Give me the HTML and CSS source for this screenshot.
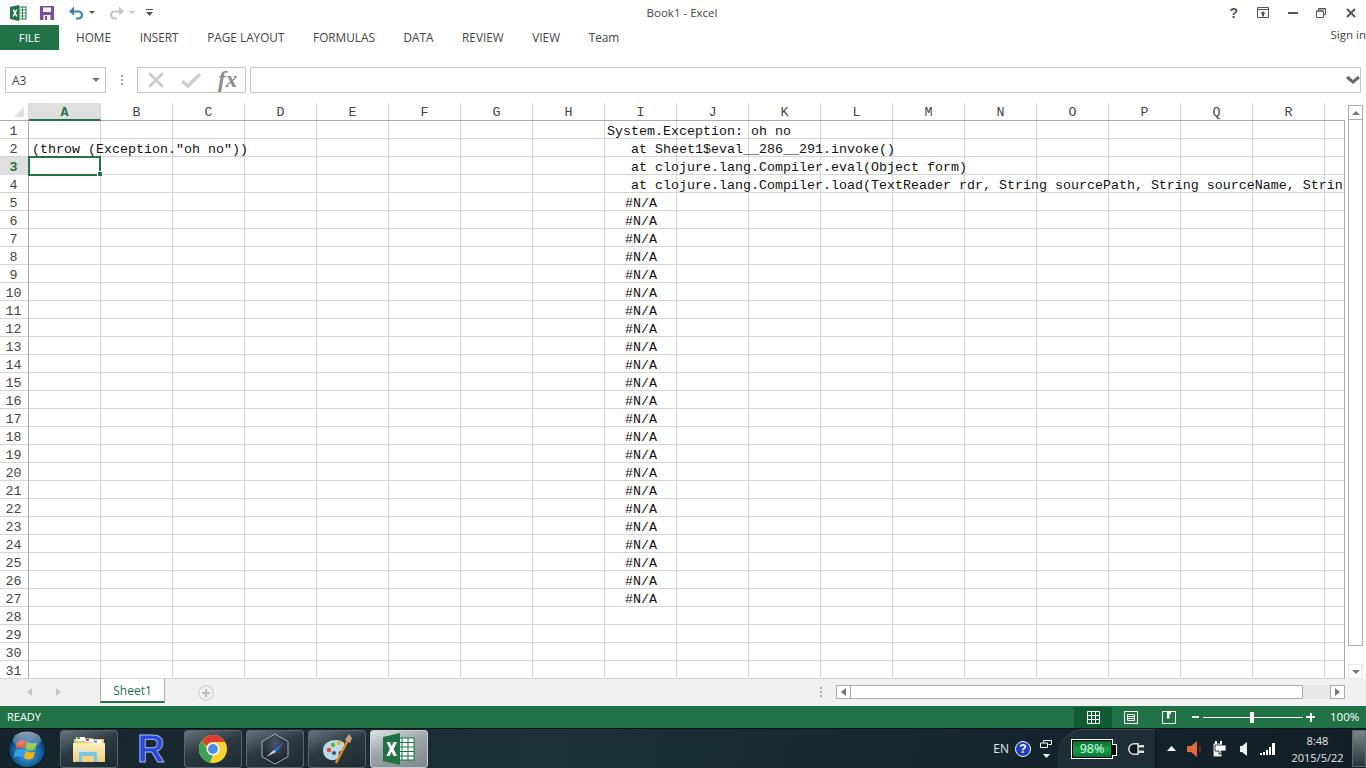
FILE: index.html
```html
<!DOCTYPE html>
<html lang="en">
<head>
<meta charset="utf-8">
<title>Book1 - Excel</title>
<link rel="stylesheet" href="styles.css">
</head>
<body>
<div class="app">
  <header class="titlebar">
    <div class="qat">
      <svg class="q-xl" width="17" height="16" viewBox="0 0 17 16"><rect x="6" y="2" width="10" height="12" fill="#fff" stroke="#217346"/><path d="M9 2v12M12.500 2v12M6 5h10M6 8h10M6 11h10" stroke="#217346" stroke-width=".8"/><path d="M0 2l9-2v16l-9-2z" fill="#217346"/><path d="M2.500 4.500h1.700L5 6.500l.9-2h1.600L5.900 8l1.700 3.500H6L5 9.300 4 11.500H2.400L4.100 8z" fill="#fff"/></svg>
      <svg class="q-save" width="14" height="14" viewBox="0 0 14 14"><path d="M0 0h14v14H0z" fill="#7f4b9f"/><path d="M3 1.500h8v4.500H3z" fill="#fff"/><path d="M3.500 9h7v5h-7z" fill="#fff"/><path d="M5 10h2v4H5z" fill="#7f4b9f"/></svg>
      <svg class="q-undo" width="15" height="14" viewBox="0 0 15 14"><path d="M2 5.500h7.500a3.500 3.500 0 0 1 0 7H7" fill="none" stroke="#3b7fb5" stroke-width="2.200"/><path d="M0 5.500L5 .5v9z" fill="#3b7fb5"/></svg>
      <span class="caret c-undo"></span>
      <svg class="q-redo" width="15" height="14" viewBox="0 0 15 14"><path d="M13 5.500H5.500a3.500 3.500 0 0 0 0 7H8" fill="none" stroke="#c4c4c4" stroke-width="2.200"/><path d="M15 5.500L10 .5v9z" fill="#c4c4c4"/></svg>
      <span class="caret c-redo light"></span>
      <svg class="q-cust" width="7" height="8" viewBox="0 0 7 8"><path d="M0 0h7v1H0zM0 3h7L3.500 7z" fill="#555"/></svg>
    </div>
    <div class="doc-title">Book1 - Excel</div>
    <div class="winctl">
      <span class="help">?</span>
      <svg class="w-disp" width="12" height="11" viewBox="0 0 12 11"><path d="M.5.500h11v10H.5zM.5 2.500h11" fill="none" stroke="#555"/><path d="M6 4l2.500 3H7v2.500H5V7H3.500z" fill="#555"/></svg>
      <svg class="w-min" width="10" height="3" viewBox="0 0 10 3"><path d="M0 0h10v2H0z" fill="#555"/></svg>
      <svg class="w-res" width="10" height="10" viewBox="0 0 10 10"><path d="M2.500 2.500V.5h7v6h-2M.5 3v6.500h7V3z" fill="none" stroke="#555"/><path d="M.5 3h7M2.500 1h7" stroke="#555"/></svg>
      <svg class="w-close" width="10" height="10" viewBox="0 0 10 10"><path d="M1 1l8 8M9 1L1 9" stroke="#555" stroke-width="2"/></svg>
    </div>
  </header>

  <nav class="ribbon">
    <div class="file">FILE</div>
    <div class="rtabs">
      <span class="rtab">HOME</span>
      <span class="rtab">INSERT</span>
      <span class="rtab">PAGE LAYOUT</span>
      <span class="rtab">FORMULAS</span>
      <span class="rtab">DATA</span>
      <span class="rtab">REVIEW</span>
      <span class="rtab">VIEW</span>
      <span class="rtab">Team</span>
    </div>
    <div class="signin">Sign in</div>
  </nav>

  <section class="fbar">
    <div class="namebox"><span>A3</span><i class="tri"></i></div>
    <div class="dots"></div>
    <div class="fbtns">
      <svg width="18" height="16" viewBox="0 0 18 16"><path d="M2 1l14 14M16 1L2 15" stroke="#cfcfcf" stroke-width="3"/></svg>
      <svg width="20" height="15" viewBox="0 0 20 15"><path d="M1 8l6 5L19 1" fill="none" stroke="#cfcfcf" stroke-width="3.400"/></svg>
      <span class="fx">fx</span>
    </div>
    <div class="finput">
      <svg width="14" height="9" viewBox="0 0 14 9"><path d="M1 1l6 5 6-5" fill="none" stroke="#666" stroke-width="3"/></svg>
    </div>
  </section>

  <section class="book">
    <div class="gridwrap">
      <div class="colhead">
        <div class="corner"><i></i></div>
        <div class="ch sel">A</div><div class="ch">B</div><div class="ch">C</div><div class="ch">D</div><div class="ch">E</div><div class="ch">F</div><div class="ch">G</div><div class="ch">H</div><div class="ch">I</div><div class="ch">J</div><div class="ch">K</div><div class="ch">L</div><div class="ch">M</div><div class="ch">N</div><div class="ch">O</div><div class="ch">P</div><div class="ch">Q</div><div class="ch">R</div><div class="ch tail"></div>
      </div>
      <div class="sheet">
        <div class="row"><span class="rh">1</span><span class="cell ci">System.Exception: oh no</span></div>
        <div class="row"><span class="rh">2</span><span class="cell ca">(throw (Exception."oh no"))</span><span class="cell ci">   at Sheet1$eval__286__291.invoke()</span></div>
        <div class="row"><span class="rh rsel">3</span><span class="cell ci">   at clojure.lang.Compiler.eval(Object form)</span></div>
        <div class="row"><span class="rh">4</span><span class="cell ci">   at clojure.lang.Compiler.load(TextReader rdr, String sourcePath, String sourceName, Strin</span></div>
        <div class="row"><span class="rh">5</span><span class="cell na">#N/A</span></div>
        <div class="row"><span class="rh">6</span><span class="cell na">#N/A</span></div>
        <div class="row"><span class="rh">7</span><span class="cell na">#N/A</span></div>
        <div class="row"><span class="rh">8</span><span class="cell na">#N/A</span></div>
        <div class="row"><span class="rh">9</span><span class="cell na">#N/A</span></div>
        <div class="row"><span class="rh">10</span><span class="cell na">#N/A</span></div>
        <div class="row"><span class="rh">11</span><span class="cell na">#N/A</span></div>
        <div class="row"><span class="rh">12</span><span class="cell na">#N/A</span></div>
        <div class="row"><span class="rh">13</span><span class="cell na">#N/A</span></div>
        <div class="row"><span class="rh">14</span><span class="cell na">#N/A</span></div>
        <div class="row"><span class="rh">15</span><span class="cell na">#N/A</span></div>
        <div class="row"><span class="rh">16</span><span class="cell na">#N/A</span></div>
        <div class="row"><span class="rh">17</span><span class="cell na">#N/A</span></div>
        <div class="row"><span class="rh">18</span><span class="cell na">#N/A</span></div>
        <div class="row"><span class="rh">19</span><span class="cell na">#N/A</span></div>
        <div class="row"><span class="rh">20</span><span class="cell na">#N/A</span></div>
        <div class="row"><span class="rh">21</span><span class="cell na">#N/A</span></div>
        <div class="row"><span class="rh">22</span><span class="cell na">#N/A</span></div>
        <div class="row"><span class="rh">23</span><span class="cell na">#N/A</span></div>
        <div class="row"><span class="rh">24</span><span class="cell na">#N/A</span></div>
        <div class="row"><span class="rh">25</span><span class="cell na">#N/A</span></div>
        <div class="row"><span class="rh">26</span><span class="cell na">#N/A</span></div>
        <div class="row"><span class="rh">27</span><span class="cell na">#N/A</span></div>
        <div class="row"><span class="rh">28</span></div>
        <div class="row"><span class="rh">29</span></div>
        <div class="row"><span class="rh">30</span></div>
        <div class="row"><span class="rh">31</span></div>
        <div class="active"><i></i></div>
      </div>
    </div>
    <div class="vscroll">
      <div class="sbtn up"><i></i></div>
      <div class="vthumb"></div>
      <div class="sbtn down"><i></i></div>
    </div>
  </section>

  <section class="tabbar">
    <div class="tabnav"><i class="nav-l"></i><i class="nav-r"></i></div>
    <div class="tab">Sheet1</div>
    <div class="addsheet">
      <svg width="16" height="16" viewBox="0 0 16 16"><circle cx="8" cy="8" r="7.200" fill="none" stroke="#c8c8c8"/><path d="M4 8h8M8 4v8" stroke="#bdbdbd" stroke-width="2"/></svg>
    </div>
    <div class="hdots"></div>
    <div class="hscroll">
      <div class="hbtn"><i class="nav-dl"></i></div>
      <div class="hthumb"></div>
      <div class="htrack"></div>
      <div class="hbtn"><i class="nav-dr"></i></div>
    </div>
  </section>

  <footer class="status">
    <div class="ready">READY</div>
    <div class="views">
      <div class="vb on"><svg width="13" height="13" viewBox="0 0 13 13"><path d="M.5.500h12v12H.5zM4.500.5v12M8.500.5v12M.5 4.500h12M.5 8.500h12" fill="none" stroke="#fff"/></svg></div>
      <div class="vb"><svg width="14" height="13" viewBox="0 0 14 13"><path d="M.5.500h13v12H.5zM3.500 3.500h7v6h-7zM4 5.500h6M4 7.500h6" fill="none" stroke="#fff"/></svg></div>
      <div class="vb"><svg width="14" height="13" viewBox="0 0 14 13"><path d="M.5.500h13v12H.5z" fill="none" stroke="#fff"/><path d="M5 0h2.500v7.500H5zM7.500 0H9v3H7.500z" fill="#fff"/></svg></div>
    </div>
    <div class="zoom">
      <i class="zm"></i>
      <i class="zline l"></i><i class="zthumb"></i><i class="zline r"></i>
      <i class="zp"></i>
    </div>
    <div class="pct">100%</div>
  </footer>

  <div class="taskbar">
    <div class="orb">
      <svg width="38" height="38" viewBox="0 0 38 38">
        <defs>
          <radialGradient id="og" cx="50%" cy="60%" r="55%"><stop offset="0" stop-color="#3fb1e8"/><stop offset=".7" stop-color="#135c9c"/><stop offset="1" stop-color="#0d2c4e"/></radialGradient>
          <linearGradient id="gls" x1="0" y1="0" x2="0" y2="1"><stop offset="0" stop-color="#fff" stop-opacity=".55"/><stop offset="1" stop-color="#fff" stop-opacity=".05"/></linearGradient>
        </defs>
        <circle cx="19" cy="19" r="18.500" fill="url(#og)" stroke="#0b1a26"/>
        <path d="M9 12q5-3 9-.5l-1.500 7q-4-2-9 .5z" fill="#e8552c"/>
        <path d="M19 12q5 2.500 10 .5l-2 7q-5 2-9.500-.5z" fill="#8cc63f"/>
        <path d="M7.300 20.500q4.500-2.500 9 0l-1.500 7q-4.500-2.500-9 0z" fill="#3aa3e3"/>
        <path d="M17.500 21q4.500 2.500 9.500.5l-2 7q-5 2-9-.5z" fill="#f5b21b"/>
        <ellipse cx="19" cy="10" rx="14" ry="8.500" fill="url(#gls)"/>
      </svg>
    </div>
    <div class="tb t-ex">
      <svg width="32" height="28" viewBox="0 0 32 28">
        <defs><linearGradient id="fo" x1="0" y1="0" x2="0" y2="1"><stop offset="0" stop-color="#fdf1bd"/><stop offset="1" stop-color="#eecf79"/></linearGradient></defs>
        <path d="M1 4h30v23H1z" fill="#e8c66d"/>
        <path d="M3 2h9v4H3z" fill="#fff"/><path d="M4 2h3v2H4z" fill="#3fae49"/>
        <path d="M12 3.500h8V7h-8z" fill="#fff"/><path d="M13 4h3v2h-3z" fill="#cf4b37"/>
        <path d="M20 5h9v3h-9z" fill="#fff"/><path d="M21 5.500h3v2h-3z" fill="#3b8ed0"/>
        <path d="M0 8h32v19H0z" fill="url(#fo)"/>
        <path d="M6 17h18v10h-3v-6H9v6H6z" fill="#7ec6e8"/><path d="M4 15h10v2H4z" fill="#c6ecf8"/>
      </svg>
    </div>
    <div class="r-pin"><span>R</span></div>
    <div class="tb t-ch">
      <svg width="28" height="28" viewBox="0 0 28 28">
        <circle cx="14" cy="14" r="14" fill="#fbd433"/>
        <path d="M14 0a14 14 0 0 1 12.100 7H14a7 7 0 0 0-6.600 4.500L2.900 5.500A14 14 0 0 1 14 0z" fill="#dd3e32"/>
        <path d="M2.900 5.500L8 14a6 6 0 0 0 6 6l-3.300 7.600A14 14 0 0 1 2.900 5.500z" fill="#3ba457"/>
        <circle cx="14" cy="14" r="6.500" fill="#fff"/><circle cx="14" cy="14" r="5" fill="#4d8fdf"/>
      </svg>
    </div>
    <div class="tb t-sa">
      <svg width="28" height="32" viewBox="0 0 28 32">
        <defs><radialGradient id="hx" cx="50%" cy="30%" r="70%"><stop offset="0" stop-color="#4a5568"/><stop offset="1" stop-color="#171c28"/></radialGradient></defs>
        <path d="M14 1l13 7.500v15L14 31 1 23.500v-15z" fill="url(#hx)" stroke="#aeb3ba"/>
        <path d="M23 9L13 17l2 2z" fill="#1a7be8"/><path d="M5 24l8-7 2 2z" fill="#d6d9de"/>
      </svg>
    </div>
    <div class="tb t-pa">
      <svg width="32" height="30" viewBox="0 0 32 30">
        <path d="M3 17c0-7 7-10 13-10 7 0 10 4 9 8-1 3-5 2-6 4-1 3 1 5-2 7-5 3-14 0-14-9z" transform="translate(-1 -1)" fill="#bcd9ea"/>
        <circle cx="8" cy="16" r="2.200" fill="#d94a3b"/><circle cx="12" cy="11" r="2.200" fill="#6bb33e"/><circle cx="18" cy="9" r="2.200" fill="#e6b32d"/><circle cx="13" cy="19" r="2" fill="#31525f"/>
        <path d="M27 6L15 29" stroke="#e98a1f" stroke-width="2.400"/><path d="M24 6l4-6 3 4-2 5z" fill="#c5a078"/>
      </svg>
    </div>
    <div class="tb t-xl">
      <svg width="32" height="32" viewBox="0 0 32 32">
        <path d="M14 5h17v22H14z" fill="#fff" stroke="#1f7244"/>
        <path d="M19 5v22M25 5v22M14 9.500h17M14 14h17M14 18.500h17M14 23h17" stroke="#1f7244"/>
        <path d="M0 4L17 0v32L0 28z" fill="#1f7244"/>
        <path d="M3.500 9h3.400l1.800 4.300L10.600 9H14l-3.400 7L14 23h-3.500l-1.900-4.400L6.700 23H3.300l3.500-7z" fill="#fff"/>
      </svg>
    </div>
    <div class="tray">
      <span class="lang">EN</span>
      <span class="qhelp">?</span>
      <div class="lbar">
        <svg width="12" height="8" viewBox="0 0 12 8"><path d="M3.500 2.500v-2h8v4h-3M.5 3h7v4.500h-7z" fill="none" stroke="#fff"/></svg>
        <svg width="7" height="4" viewBox="0 0 7 4"><path d="M0 0h7L3.500 4z" fill="#fff"/></svg>
      </div>
      <div class="gadget">
        <div class="batt"><div class="bfill">98%</div></div>
        <svg class="plug" width="17" height="12" viewBox="0 0 17 12"><path d="M10 .8H6a5.200 5.200 0 0 0 0 10.400h4z" fill="#0f171b" stroke="#ddd" stroke-width="1.500"/><path d="M10 2h6v2.500h-6zM10 7.500h6V10h-6z" fill="#ddd"/></svg>
      </div>
      <div class="sysicons">
        <svg width="9" height="5" viewBox="0 0 9 5"><path d="M4.500 0L9 5H0z" fill="#fff"/></svg>
        <svg class="s-spk" width="16" height="18" viewBox="0 0 16 18"><path d="M0 6h4l6-5v16l-6-5H0z" fill="#e06a3a"/><path d="M13 6v6" stroke="#7a2c1c" stroke-width="1.500"/></svg>
        <svg width="14" height="18" viewBox="0 0 14 18"><path d="M1 3h9v14H1z" fill="#eee" stroke="#111"/><path d="M4 1v4M9 1v4" stroke="#fff" stroke-width="2"/><path d="M3 5h11v6H9v3H7v-3H3z" fill="#fff" stroke="#111" stroke-width=".8"/></svg>
        <svg class="s-snd" width="7" height="14" viewBox="0 0 7 14"><path d="M0 4h2l5-4v14l-5-4H0z" fill="#eee"/></svg>
        <svg class="s-sig" width="15" height="12" viewBox="0 0 15 12"><path d="M0 10h2v2H0zM3 9h2v3H3zM6 7h2v5H6zM9 4h2v8H9zM12 0h3v12h-3z" fill="#fff"/></svg>
      </div>
      <div class="clock"><span>8:48</span><span>2015/5/22</span></div>
      <div class="desk"></div>
    </div>
  </div>
</div>
</body>
</html>
```

FILE: styles.css
```css
* { box-sizing: border-box; }
html, body { margin: 0; padding: 0; }
body { width: 1366px; height: 768px; overflow: hidden; background: #fff; font-family: "Open Sans", "Liberation Sans", sans-serif; color: #444; }
.app { display: flex; flex-direction: column; width: 1366px; height: 768px; }
i { display: block; }

/* title bar */
.titlebar { height: 25px; display: flex; align-items: center; position: relative; flex: none; }
.qat { display: flex; align-items: center; padding-left: 10px; }
.q-save { margin-left: 13px; }
.q-undo { margin-left: 15px; }
.caret { width: 0; height: 0; border-left: 3px solid transparent; border-right: 3px solid transparent; border-top: 3px solid #555; margin-left: 5px; }
.caret.light { border-top-color: #c4c4c4; }
.q-redo { margin-left: 14px; }
.q-cust { margin-left: 11px; }
.doc-title { position: absolute; left: 0; right: 0; top: 4px; text-align: center; font-size: 11.500px; line-height: 17px; text-indent: -2px; }
.winctl { margin-left: auto; display: flex; align-items: center; padding-right: 10px; }
.help { font: bold 14px "Liberation Sans", sans-serif; color: #555; }
.w-disp { margin-left: 19px; }
.w-min { margin-left: 19px; margin-top: 2px; }
.w-res { margin-left: 18px; }
.w-close { margin-left: 20px; }

/* ribbon */
.ribbon { height: 25px; display: flex; flex: none; position: relative; }
.file { width: 59px; background: #217346; color: #fff; font-size: 11.500px; line-height: 25px; text-align: center; }
.rtabs { display: flex; gap: 28.600px; padding-left: 17px; font-size: 11.800px; line-height: 25px; }
.signin { margin-left: auto; font-size: 11.500px; line-height: 20px; color: #444; }

/* formula bar */
.fbar { height: 53px; flex: none; display: flex; padding: 17px 5px 10px 5px; }
.namebox { width: 101px; border: 1px solid #c6c6c6; display: flex; align-items: center; justify-content: space-between; padding: 0 4px 0 6px; font-size: 12px; }
.tri { width: 0; height: 0; border-left: 4px solid transparent; border-right: 4px solid transparent; border-top: 4px solid #777; margin-right: 1px; }
.dots { width: 2px; height: 10px; margin: 8px 14px 0 15px; background: repeating-linear-gradient(to bottom, #aaa 0 2px, transparent 2px 4px); }
.fbtns { width: 109px; border: 1px solid #c6c6c6; display: flex; align-items: center; gap: 16px; padding-left: 9px; }
.fx { font: italic bold 23px "Liberation Serif", serif; color: #8a8a8a; margin-left: 1px; line-height: 24px; }
.finput { width: 1111px; margin-left: 4px; border: 1px solid #c6c6c6; display: flex; align-items: center; justify-content: flex-end; }

/* grid */
.book { height: 576px; flex: none; display: flex; }
.gridwrap { width: 1345px; flex: none; }
.colhead { height: 18px; display: flex; border-bottom: 1px solid #ababab; font: 13.330px/20px "Liberation Mono", monospace; color: #444; }
.corner { width: 29px; flex: none; position: relative; border-right: 1px solid #d4d4d4; }
.corner i { position: absolute; right: 4px; bottom: 3px; width: 0; height: 0; border-left: 10px solid transparent; border-bottom: 10px solid #dfdfdf; }
.ch { width: 72px; flex: none; text-align: center; border-right: 1px solid #d4d4d4; }
.ch.tail { width: 20px; border-right: none; }
.ch.sel { background: #dfdfdf; color: #217346; font-weight: bold; border-bottom: 2px solid #217346; height: 18px; }
.sheet { height: 558px; width: 1345px; position: relative; overflow: hidden; border-right: 1px solid #ababab;
  background-image: linear-gradient(to left, #d4d4d4 1px, transparent 1px), linear-gradient(to top, #d4d4d4 1px, transparent 1px);
  background-size: 72px 18px, 72px 18px; background-position: 29px 0, 0 0; }
.row { height: 18px; display: grid; grid-template-columns: 29px repeat(18, 72px) 20px; font: 13.330px/16px "Liberation Mono", monospace; color: #111; white-space: pre; }
.rh { grid-column: 1; height: 18px; text-align: center; border-right: 1px solid #ababab; padding: 3px 1px 0 0; color: #444; }
.rsel { background: #dfdfdf; color: #217346; font-weight: bold; border-bottom: 1px solid #dfdfdf; }
.cell { min-width: 0; height: 18px; padding-top: 3px; }
.ca { grid-column: 2; padding-left: 3px; }
.ci { grid-column: 10; padding-left: 2px; }
.na { grid-column: 10; text-align: center; }
.active { position: absolute; left: 28px; top: 35px; width: 73px; height: 20px; border: 2px solid #217346; }
.active i { position: absolute; right: -4px; bottom: -3px; background: #217346; border: 1px solid #fff; box-sizing: content-box; width: 4px; height: 4px; }

/* vertical scrollbar */
.vscroll { flex: 1; display: flex; flex-direction: column; padding: 2px 3px; background: #fff; }
.sbtn { height: 15px; border: 1px solid #ababab; display: flex; align-items: center; justify-content: center; flex: none; background: #fff; }
.up i { width: 0; height: 0; border-left: 4px solid transparent; border-right: 4px solid transparent; border-bottom: 4px solid #777; }
.down i { width: 0; height: 0; border-left: 4px solid transparent; border-right: 4px solid transparent; border-top: 4px solid #777; }
.down { border-color: #e8e8e8; }
.vthumb { height: 526px; border: 1px solid #ababab; border-top: none; background: #fff; margin-bottom: 18px; flex: none; }

/* sheet tabs */
.tabbar { height: 27px; flex: none; background: #f1f1f1; display: flex; align-items: flex-start; }
.tabnav { width: 100px; display: flex; gap: 24px; padding: 9px 0 0 27px; }
.nav-l { border: 4px solid transparent; border-left: none; border-right: 5px solid #c6c6c6; }
.nav-r { border: 4px solid transparent; border-right: none; border-left: 5px solid #c6c6c6; }
.tab { width: 65px; height: 24px; background: #fff; border: 1px solid #ababab; border-top: none; border-bottom: 2px solid #217346; color: #217346; font-size: 12px; line-height: 23px; text-align: center; }
.addsheet { margin: 5px 0 0 33px; height: 16px; }
.hdots { width: 2px; height: 10px; margin: 8px 0 0 606px; background: repeating-linear-gradient(to bottom, #aaa 0 2px, transparent 2px 4px); }
.hscroll { margin: 6px 0 0 14px; height: 14px; width: 509px; display: flex; }
.hbtn { width: 15px; border: 1px solid #ababab; background: #fff; display: flex; align-items: center; justify-content: center; flex: none; }
.nav-dl { border: 4px solid transparent; border-left: none; border-right: 5px solid #777; }
.nav-dr { border: 4px solid transparent; border-right: none; border-left: 5px solid #777; }
.hthumb { width: 452px; background: #fff; border: 1px solid #ababab; border-left: none; flex: none; }
.htrack { flex: 1; background: #e8e8e8; }

/* status bar */
.status { height: 22px; flex: none; background: #217346; color: #fff; display: flex; align-items: stretch; font-size: 11.500px; line-height: 21px; }
.ready { padding-left: 7px; width: 1074px; font-size: 11px; }
.views { display: flex; }
.vb { width: 38px; display: flex; align-items: center; justify-content: center; }
.vb.on { background: #0f5c33; margin-top: 1px; }
.zoom { display: flex; align-items: center; padding-left: 4px; width: 142px; }
.zm { width: 7px; height: 2px; background: #fff; margin-right: 4px; }
.zline { height: 1px; background: #fff; }
.zline.l { width: 47px; }
.zline.r { width: 49px; }
.zthumb { width: 4px; height: 11px; background: #fff; }
.zp { width: 9px; height: 9px; margin-left: 3px; background: linear-gradient(#fff, #fff) center/100% 2px no-repeat, linear-gradient(#fff, #fff) center/2px 100% no-repeat; }

/* taskbar */
.taskbar { height: 40px; flex: none; display: flex; align-items: center; background: linear-gradient(100deg, #15252d, #1b3039 40%, #14252e 75%, #111e25); border-top: 1px solid #0c1418; color: #fff; }
.orb { width: 38px; height: 38px; margin-left: 8px; flex: none; }
.tb { width: 58px; height: 38px; flex: none; border: 1px solid #59666c; border-radius: 3px; display: flex; align-items: center; justify-content: center; background: linear-gradient(160deg, #66737a, #2b3a41 45%, #1d2c33); }
.t-ex { margin-left: 14px; }
.r-pin { width: 66px; text-align: center; flex: none; }
.r-pin span { font: bold 38px/38px "Liberation Sans", sans-serif; color: #2b48d8; -webkit-text-stroke: 1px #9db3f0; }
.t-sa { margin-left: 4px; }
.t-pa { margin-left: 4px; }
.t-xl { margin-left: 4px; background: linear-gradient(160deg, #dfe3e4, #9ca5a8 45%, #7f898c); border-color: #c8cdcf; }
.tray { margin-left: auto; display: flex; align-items: center; height: 39px; }
.lang { font-size: 12px; color: #e6e6e6; margin-left: 2px; }
.qhelp { width: 16px; height: 16px; border-radius: 50%; background: #1d3fc0; border: 1px solid #fff; margin-left: 6px; color: #fff; font: bold 12px/14px "Liberation Sans", sans-serif; text-align: center; }
.lbar { display: flex; flex-direction: column; align-items: center; gap: 6px; margin-left: 9px; width: 12px; }
.gadget { width: 98px; height: 39px; margin-left: 6px; padding-left: 13px; display: flex; align-items: center; gap: 15px; background: #1e2e36; border-radius: 26px 0 0 0; border-right: 1px solid #0c1418; border-top: 1px solid #3a474d; }
.batt { width: 42px; height: 20px; border: 1px solid #fff; padding: 1px; position: relative; background: #000; }
.batt::after { content: ""; position: absolute; right: -5px; top: 4px; width: 4px; height: 10px; background: #000; border: 1px solid #fff; border-left: none; }
.bfill { width: 38px; height: 16px; background: linear-gradient(#0d6a2e, #12a24a 55%, #0a7033); font-size: 12.500px; line-height: 16px; text-align: center; color: #dfe; }
.plug { flex: none; }
.sysicons { display: flex; align-items: center; padding-left: 11px; gap: 9px; width: 132px; }
.s-spk { margin-left: 2px; }
.s-snd { margin-left: 5px; }
.s-sig { margin-left: 4px; }
.clock { width: 65px; display: flex; flex-direction: column; align-items: center; font-size: 11px; line-height: 17px; color: #e8e8e8; margin-left: -3px; }
.desk { width: 14px; height: 37px; background: linear-gradient(#7c868a, #29343a); border: 1px solid #5f6a6f; margin-left: 2px; }
```
